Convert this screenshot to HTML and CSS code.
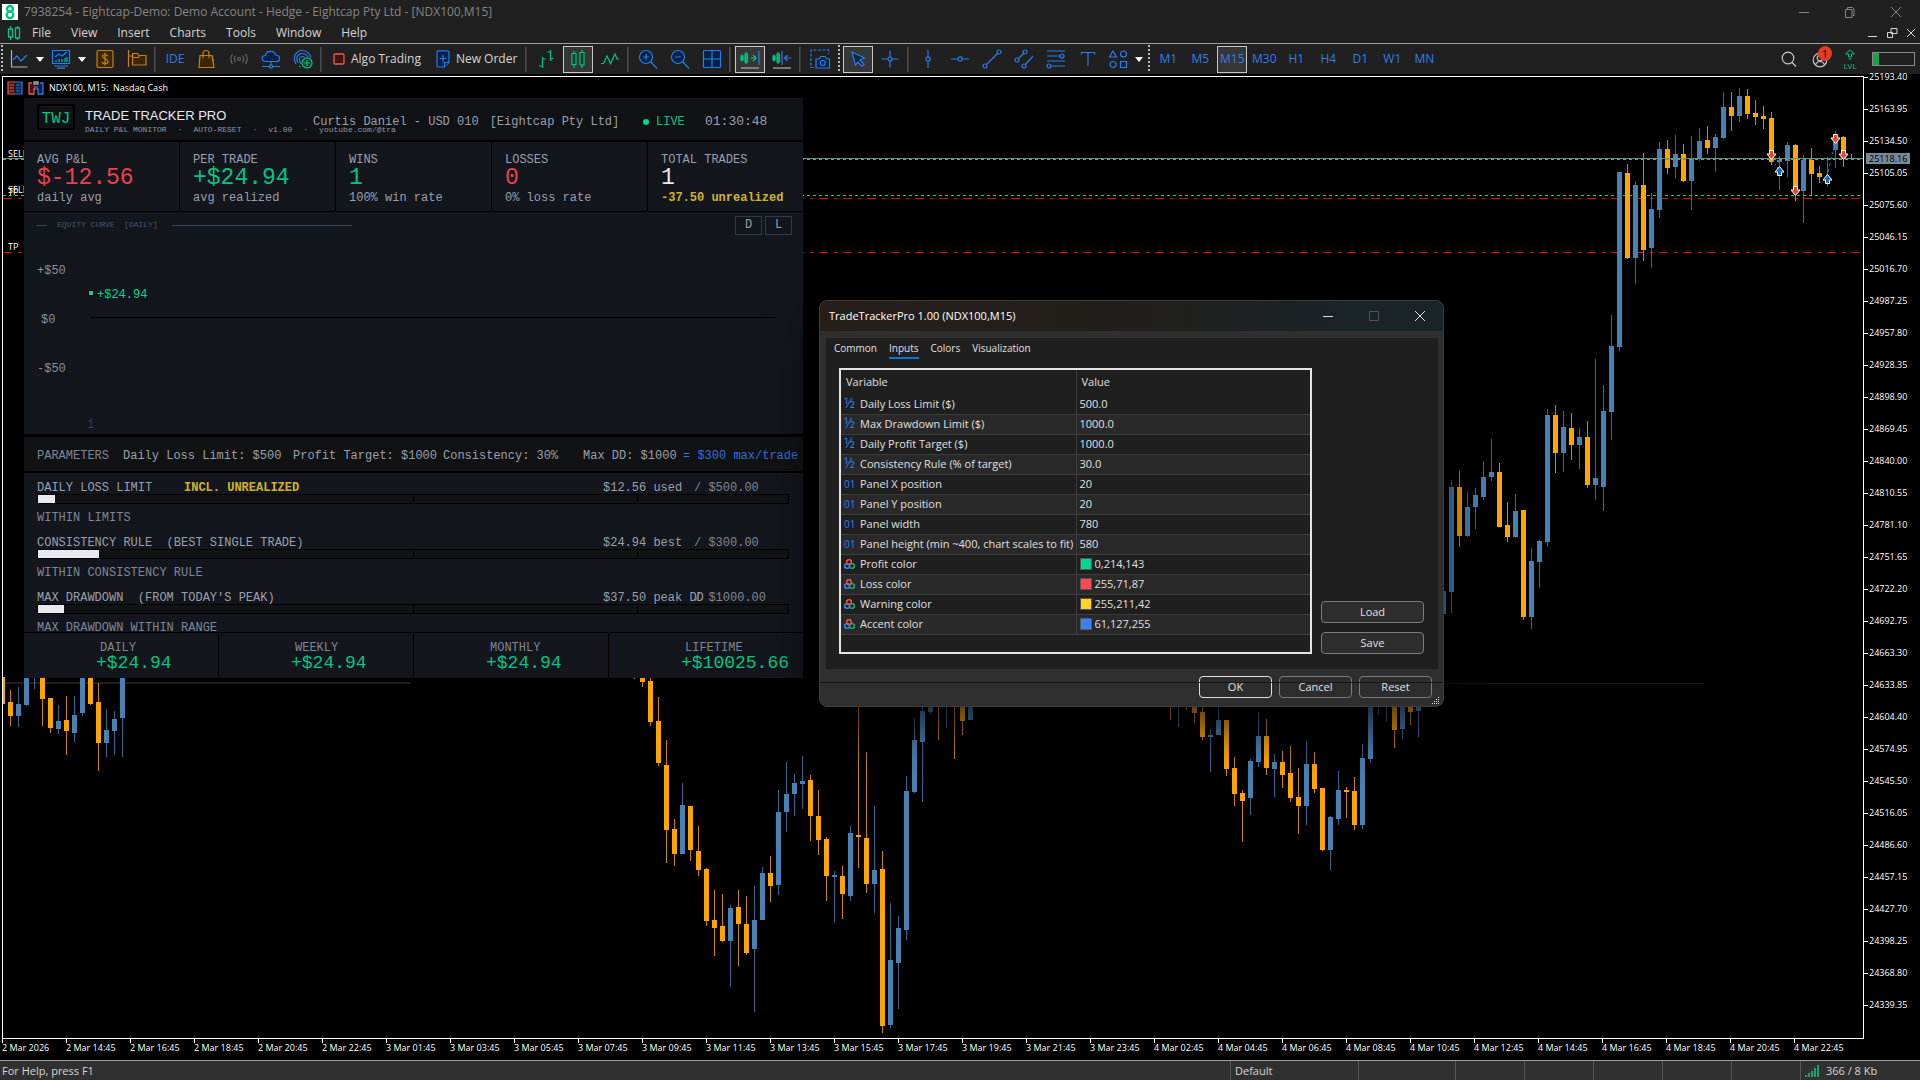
FILE: index.html
```html
<!DOCTYPE html>
<html lang="en">
<head>
<meta charset="utf-8">
<title>7938254 - Eightcap-Demo: Demo Account - Hedge - Eightcap Pty Ltd - [NDX100,M15]</title>
<link rel="stylesheet" href="styles.css">
</head>
<body>
<header class="titlebar">
  <svg class="logo" viewBox="0 0 16 16"><rect width="16" height="16" fill="#fff"/><g fill="none" stroke="#00c583" stroke-width="2.4"><circle cx="8" cy="4.9" r="2.9"/><circle cx="8" cy="10.9" r="3.3"/></g></svg>
  <span class="title-text">7938254 - Eightcap-Demo: Demo Account - Hedge - Eightcap Pty Ltd - [NDX100,M15]</span>
  <div class="win-controls">
    <button aria-label="Minimize"><svg viewBox="0 0 12 12"><path d="M1 6.5h10"/></svg></button>
    <button aria-label="Restore"><svg viewBox="0 0 12 12"><path d="M1.5 3.5h6.5v8h-6.5zM3.5 3V1.5h5l1.5 1.5v6.5h-1.5"/></svg></button>
    <button aria-label="Close"><svg viewBox="0 0 12 12"><path d="M1 1l10 10M11 1L1 11"/></svg></button>
  </div>
</header>
<nav class="menubar">
  <svg class="menu-logo" viewBox="0 0 14 16" fill="none" stroke="#00c583" stroke-width="1.3"><path d="M3.5 1v3M3.5 12v3M10.5 1v2M10.5 13v2M1.5 4h4v8h-4zM8.500 3h4v10h-4z"/></svg>
  <button>File</button><button>View</button><button>Insert</button><button>Charts</button><button>Tools</button><button>Window</button><button>Help</button>
  <div class="mdi-controls">
    <button aria-label="Minimize chart"><svg viewBox="0 0 12 12"><path d="M1 9.5h9"/></svg></button>
    <button aria-label="Restore chart"><svg viewBox="0 0 12 12"><path d="M5 1.5h6v5h-6zM1.5 5.5h5v5h-5z"/></svg></button>
    <button aria-label="Close chart"><svg viewBox="0 0 12 12"><path d="M2 2l8 8M10 2L2 10"/></svg></button>
  </div>
</nav>
<div class="toolbar">
  <i class="grip"></i>
  <button class="tool drop" aria-label="Line studies"><svg class="ic gray" viewBox="0 0 20 20"><path d="M2.5 1v17h16"/><path class="b" d="M4 11l4-4 4 5 6-6"/></svg><i class="caret"></i></button>
  <button class="tool drop" aria-label="Indicators"><svg class="ic blue" viewBox="0 0 20 20"><path class="fillb" d="M1.5 1.5h17v13h-17zM3 17h14M6 19.2h8"/><path d="M4 8l4-3 3 2 5-4"/><path class="g" d="M5 13v-2M8 13v-3M11 13v-3M14 13V9M16 13V8"/></svg><i class="caret"></i></button>
  <button class="tool" aria-label="Market"><svg class="ic amber" viewBox="0 0 20 20"><rect x="2" y="1.5" width="16" height="17" rx="1.5" fill="#3a2600"/><path d="M13 7c-.5-1.5-5.5-2-5.500.5S13 9.5 13 12.5s-5.5 2.5-6 .5M10 3.5v13"/></svg></button>
  <button class="tool" aria-label="Navigator"><svg class="ic amber" viewBox="0 0 20 20"><path d="M1.5 1v17M1.5 7h4"/><path fill="#3a2600" d="M5.5 4.5h5l1.5 2h7v9.5H5.500zM5.5 8.5h6l1-2"/></svg></button>
  <i class="sep"></i>
  <button class="tool ide">IDE</button>
  <button class="tool" aria-label="Shop"><svg class="ic amber" viewBox="0 0 20 20"><path fill="#3a2600" d="M3 6.5h12l2 12H2z"/><path d="M6 9V4.5c0-4 6-4 6 0V9M15 7l1.5 5"/></svg></button>
  <button class="tool" aria-label="Signals"><svg class="ic dim" viewBox="0 0 20 20"><circle cx="10" cy="10" r="1.5"/><path d="M6.5 6.5q-2.5 3.5 0 7M13.5 6.5q2.5 3.5 0 7M3.5 5q-3.5 5 0 10M16.5 5q3.5 5 0 10"/></svg></button>
  <button class="tool" aria-label="VPS"><svg class="ic blue" viewBox="0 0 20 20"><path class="fillb" d="M5 12.5c-5 0-5-6-.5-6C5 1 14 1 14.5 6c5.5 0 5 6.5 1 6.500z"/><path d="M10 13v3M1 17.5h7M12 17.5h7"/><circle cx="10" cy="17.5" r="1.6"/></svg></button>
  <button class="tool" aria-label="Community"><svg class="ic blue" viewBox="0 0 20 20"><path d="M3 15C-1 8 3 1.5 9 1.5s8.5 4 8.5 7.5M5 14C2 9 5 4.5 9 4.5s5.5 2 5.5 4.5M8 15c-3-5-1-7.5 1-7.5s2.500 1 2.5 2M6 17l1.500 1"/><circle class="g" cx="14" cy="14" r="5" fill="#073822"/><path class="g" d="M14 11v6M11 14h6"/></svg></button>
  <i class="sep"></i>
  <button class="tool wide"><svg class="ic12" viewBox="0 0 12 12"><rect x="1" y="1" width="10" height="10" rx="1" fill="#3d1514" stroke="#f0574f" stroke-width="1.3"/></svg>Algo Trading</button>
  <button class="tool wide"><svg class="ic14" viewBox="0 0 14 18" fill="#002244" stroke="#2b7de9" stroke-width="1.2"><path d="M1 2q0-1.2 1.2-1.2h9.6Q13 .8 13 2v10.5L8.5 17H2q-1 0-1-1.200z"/><path d="M8.5 17v-4.500H13M7 5v7M3.8 8.5h6.4"/></svg>New Order</button>
  <i class="sep"></i>
  <button class="tool" aria-label="Bar chart"><svg class="ic green" viewBox="0 0 20 20"><path d="M6.5 8v11M3 17h3.5M6.5 10h3M14.5 1v11M11.5 3h3M14.5 9.5h3"/></svg></button>
  <button class="tool on" aria-label="Candlesticks"><svg class="ic green" viewBox="0 0 20 20"><path fill="#073822" d="M4 4.5h4v11H4zM12 3.5h4v12.5h-4z"/><path d="M6 2v2.5M6 15.5V19M14 1v2.5M14 16v3"/></svg></button>
  <button class="tool" aria-label="Line chart"><svg class="ic green" viewBox="0 0 20 20"><path d="M1 14.5h2.5L7 7l3.5 7.500L15 5l2 5h2"/></svg></button>
  <i class="sep"></i>
  <button class="tool" aria-label="Zoom in"><svg class="ic blue" viewBox="0 0 20 20"><circle class="fillb" cx="8" cy="8" r="6.5"/><path d="M12.5 12.5l6.5 7M8 5v6M5 8h6"/></svg></button>
  <button class="tool" aria-label="Zoom out"><svg class="ic blue" viewBox="0 0 20 20"><circle class="fillb" cx="8" cy="8" r="6.5"/><path d="M12.5 12.5l6.5 7M5 8h6"/></svg></button>
  <button class="tool" aria-label="Tile windows"><svg class="ic blue" viewBox="0 0 20 20"><rect class="fillb" x="1.5" y="1.5" width="17" height="17" rx="1"/><path d="M10 1.5v17M1.5 10h17"/></svg></button>
  <i class="sep"></i>
  <button class="tool on" aria-label="Auto scroll"><svg class="ic green" viewBox="0 0 20 20"><path d="M2 5.5v7M1 7h2v4H1zM6 3v12M5 5h2.5v8H5zM10.5 9h5M13 6l3 3-3 3"/><path class="b" d="M19 2v14"/><path class="w" d="M1 19h18"/></svg></button>
  <button class="tool" aria-label="Chart shift"><svg class="ic green" viewBox="0 0 20 20"><path d="M2 5.5v7M1 7h2v4H1zM6 3v12M5 5h2.5v8H5z"/><path class="b" d="M10 2v14M13 9h6M15.5 6l-3 3 3 3"/><path class="w" d="M1 19h18"/></svg></button>
  <i class="sep"></i>
  <button class="tool" aria-label="Screenshot"><svg class="ic blue" viewBox="0 0 20 20"><path stroke-dasharray="3 1.5" d="M3.5 18.5h-2.5v-17.500h17.5v4"/><path class="fillb" d="M6 10h3l2-2.5h4l2 2.5h2.5v9H6z"/><circle cx="12.8" cy="14" r="2.5"/><path d="M12.5 14h.7"/></svg></button>
  <i class="grip"></i>
  <button class="tool on" aria-label="Cursor"><svg class="ic blue" viewBox="0 0 20 20"><path class="fillb" d="M4 3l12.5 6-4.5 2 4 4.5-2 1.8-4-4.300L7.500 16z"/></svg></button>
  <button class="tool" aria-label="Crosshair"><svg class="ic blue" viewBox="0 0 20 20"><circle cx="10" cy="10" r="2"/><path d="M10 1.5V8M10 12v6.5M1.5 10H8M12 10h6.5"/></svg></button>
  <i class="sep"></i>
  <button class="tool" aria-label="Vertical line"><svg class="ic blue" viewBox="0 0 20 20"><circle cx="10" cy="10" r="2.2"/><path d="M10 1v6.5M10 12.5V19"/></svg></button>
  <button class="tool" aria-label="Horizontal line"><svg class="ic blue" viewBox="0 0 20 20"><circle cx="10" cy="10" r="2.2"/><path d="M1 10h6.5M12.5 10H19"/></svg></button>
  <button class="tool" aria-label="Trendline"><svg class="ic blue" viewBox="0 0 20 20"><circle cx="3" cy="17" r="2"/><circle cx="17" cy="3" r="2"/><path d="M4.5 15.5l11-11"/></svg></button>
  <button class="tool" aria-label="Channel"><svg class="ic blue" viewBox="0 0 20 20"><circle cx="3" cy="11" r="2"/><circle cx="11" cy="3" r="2"/><circle cx="10" cy="17" r="2"/><path d="M4.5 9.5l5-5M11.5 15.5L19 7"/></svg></button>
  <button class="tool" aria-label="Fibonacci"><svg class="ic blue" viewBox="0 0 20 20"><path d="M1 2h18M1 7h13M1 12h18M5 17h14"/><circle cx="16" cy="7" r="2"/><circle cx="3" cy="17" r="2"/></svg></button>
  <button class="tool" aria-label="Text"><svg class="ic blue" viewBox="0 0 20 20"><path d="M3.5 5.5V3.5h13v2M10 3.5V17"/></svg></button>
  <button class="tool drop" aria-label="Shapes"><svg class="ic blue" viewBox="0 0 20 20"><path d="M5 2l3.5 6h-7zM12.5 12.5h6v6h-6z"/><circle cx="15.5" cy="5" r="3"/><circle cx="5" cy="15.5" r="3"/></svg><i class="caret"></i></button>
  <i class="grip"></i>
  <button class="tool tf">M1</button><button class="tool tf">M5</button><button class="tool tf on">M15</button><button class="tool tf">M30</button><button class="tool tf">H1</button><button class="tool tf">H4</button><button class="tool tf">D1</button><button class="tool tf">W1</button><button class="tool tf">MN</button>
  <div class="tool-end">
    <button class="tool" aria-label="Search"><svg class="ic light" viewBox="0 0 20 20"><circle cx="9" cy="9" r="5.8"/><path d="M13 13.5l4 4"/></svg></button>
    <button class="tool account" aria-label="Account"><svg class="ic light" viewBox="0 0 20 20"><circle cx="9" cy="11" r="6.8"/><circle cx="9" cy="9" r="2.8"/><path d="M4.5 16q1-3.5 4.5-3.5t4.5 3.5"/></svg><span class="badge">1</span></button>
    <span class="lvl"><svg viewBox="0 0 12 12" fill="none" stroke="#00c583"><path d="M6 .8L10.500 5H7.500v3h-3V5h-3z"/><path d="M4.5 10h3"/></svg>LVL</span>
    <span class="battery"><i></i></span>
  </div>
</div>
<main class="workspace">
  <section class="plot">
    <svg id="chart" class="chart" width="1860" height="961" viewBox="3 77 1860 961" shape-rendering="crispEdges"></svg>
    <div class="chart-head">
      <svg width="16" height="14" viewBox="0 0 16 14" fill="none" stroke-width="1.2"><path stroke="#f0574f" fill="#3d1514" d="M8 1H1v12h7"/><path stroke="#2b7de9" fill="#002244" d="M8 1h7v12H8"/><path stroke="#f0574f" d="M2.5 4H7M2.5 7H7M2.5 10H7"/><path stroke="#2b7de9" d="M9 4h4.5M9 7h4.5M9 10h4.5"/></svg>
      <svg width="16" height="14" viewBox="0 0 16 14" fill="none" stroke-width="1.3"><path stroke="#f0574f" fill="#3d1514" d="M4 2H1v11h5V8h1V5"/><path stroke="#2b7de9" fill="#002244" d="M12 2h3v11h-5V8H9V5"/><path stroke="#aaa" d="M6 1h4v2H6z"/></svg>
      <span>NDX100, M15:&nbsp; Nasdaq Cash</span>
    </div>

    <article class="panel">
      <header class="p-head">
        <div class="twj">TWJ</div>
        <div class="p-title">
          <h1>TRADE TRACKER PRO</h1>
          <p><span>DAILY P&amp;L MONITOR</span><span>·</span><span>AUTO-RESET</span><span>·</span><span>v1.00</span><span>·</span><span>youtube.com/@tra</span></p>
        </div>
        <div class="p-acct"><span>Curtis Daniel - USD 010</span><span>[Eightcap Pty Ltd]</span></div>
        <div class="p-live"><i></i>LIVE</div>
        <time>01:30:48</time>
      </header>
      <div class="stats">
        <div><h2>AVG P&amp;L</h2><b class="red">$-12.56</b><p>daily avg</p></div>
        <div><h2>PER TRADE</h2><b>+$24.94</b><p>avg realized</p></div>
        <div><h2>WINS</h2><b>1</b><p>100% win rate</p></div>
        <div><h2>LOSSES</h2><b class="red">0</b><p>0% loss rate</p></div>
        <div><h2>TOTAL TRADES</h2><b class="white">1</b><p class="warn">-37.50 unrealized</p></div>
      </div>
      <div class="equity">
        <div class="eq-head"><i class="dash"></i><span>EQUITY CURVE&nbsp; [DAILY]</span><i class="rule"></i><div class="eq-btns"><button>D</button><button>L</button></div></div>
        <svg class="eq-plot" width="779" height="196" viewBox="24 238 779 196">
          <rect x="91" y="317" width="685" height="1" fill="#000"/>
          <rect x="88" y="290" width="6" height="6" fill="#000"/><rect x="89" y="291" width="4" height="4" fill="#00d68f"/>
          <text x="37" y="274">+$50</text><text x="41" y="323">$0</text><text x="37" y="372">-$50</text>
          <text x="97" y="298" class="gain">+$24.94</text><text x="87" y="428" class="faint">1</text>
        </svg>
      </div>
      <div class="params"><span class="muted">PARAMETERS</span><span>Daily Loss Limit: $500</span><span>Profit Target: $1000</span><span>Consistency: 30%</span><span>Max DD: $1000</span><span class="accent">= $300 max/trade</span></div>
      <div class="limits">
        <div class="limit"><div class="l-row"><span>DAILY LOSS LIMIT</span><span class="warn">INCL. UNREALIZED</span><span>$12.56 used</span><span class="muted">/ $500.00</span></div><div class="meter"><i style="width:2.3%"></i></div><p>WITHIN LIMITS</p></div>
        <div class="limit"><div class="l-row"><span>CONSISTENCY RULE&nbsp; (BEST SINGLE TRADE)</span><span></span><span>$24.94 best</span><span class="muted">/ $300.00</span></div><div class="meter"><i style="width:8.1%"></i></div><p>WITHIN CONSISTENCY RULE</p></div>
        <div class="limit"><div class="l-row"><span>MAX DRAWDOWN&nbsp; (FROM TODAY'S PEAK)</span><span></span><span>$37.50 peak DD</span><span class="muted">/ $1000.00</span></div><div class="meter"><i style="width:3.5%"></i></div><p>MAX DRAWDOWN WITHIN RANGE</p></div>
      </div>
      <footer class="totals">
        <div><h2>DAILY</h2><b>+$24.94</b></div><div><h2>WEEKLY</h2><b>+$24.94</b></div><div><h2>MONTHLY</h2><b>+$24.94</b></div><div><h2>LIFETIME</h2><b>+$10025.66</b></div>
      </footer>
    </article>

    <section class="dialog" role="dialog" aria-label="TradeTrackerPro">
      <header class="d-title"><span>TradeTrackerPro 1.00 (NDX100,M15)</span>
        <div class="d-controls">
          <button aria-label="Minimize"><svg viewBox="0 0 12 12"><path d="M1 6.5h10"/></svg></button>
          <button aria-label="Maximize" disabled><svg viewBox="0 0 12 12"><path d="M1.5 1.5h9v9h-9z"/></svg></button>
          <button aria-label="Close"><svg viewBox="0 0 12 12"><path d="M1 1l10 10M11 1L1 11"/></svg></button>
        </div>
      </header>
      <div class="d-body">
        <div class="tabs" role="tablist"><button role="tab">Common</button><button role="tab" class="sel" aria-selected="true">Inputs</button><button role="tab">Colors</button><button role="tab">Visualization</button></div>
        <div class="d-main">
          <div class="grid-box">
            <table class="inputs">
              <thead><tr><th>Variable</th><th>Value</th></tr></thead>
              <tbody>
                <tr><td class="t-half">Daily Loss Limit ($)</td><td>500.0</td></tr>
                <tr><td class="t-half">Max Drawdown Limit ($)</td><td>1000.0</td></tr>
                <tr><td class="t-half">Daily Profit Target ($)</td><td>1000.0</td></tr>
                <tr><td class="t-half">Consistency Rule (% of target)</td><td>30.0</td></tr>
                <tr><td class="t-int">Panel X position</td><td>20</td></tr>
                <tr><td class="t-int">Panel Y position</td><td>20</td></tr>
                <tr><td class="t-int">Panel width</td><td>780</td></tr>
                <tr><td class="t-int">Panel height (min ~400, chart scales to fit)</td><td>580</td></tr>
                <tr><td class="t-color">Profit color</td><td><i class="sw profit"></i>0,214,143</td></tr>
                <tr><td class="t-color">Loss color</td><td><i class="sw loss"></i>255,71,87</td></tr>
                <tr><td class="t-color">Warning color</td><td><i class="sw warning"></i>255,211,42</td></tr>
                <tr><td class="t-color">Accent color</td><td><i class="sw accentc"></i>61,127,255</td></tr>
              </tbody>
            </table>
          </div>
          <div class="d-side"><button class="btn">Load</button><button class="btn">Save</button></div>
        </div>
      </div>
      <footer class="d-foot"><button class="btn primary">OK</button><button class="btn">Cancel</button><button class="btn">Reset</button>
        <svg class="resize" viewBox="0 0 9 9" fill="#ddd"><path d="M7 0h1v1H7zM5 2h1v1H5zM7 2h1v1H7zM3 4h1v1H3zM5 4h1v1H5zM7 4h1v1H7zM1 6h1v1H1zM3 6h1v1H3zM5 6h1v1H5zM7 6h1v1H7z"/></svg>
      </footer>
    </section>
  </section>
  <aside class="price-axis"><ol id="prices"></ol><span class="last-price">25118.16</span></aside>
  <ol class="time-axis" id="times"></ol>
</main>
<footer class="statusbar">
  <span class="s-help">For Help, press F1</span><span class="s-prof">Default</span><span class="s-a"></span><span class="s-b"></span><span class="s-b"></span><span class="s-b"></span><span class="s-b"></span><span class="s-b"></span>
  <span class="s-net"><svg width="14" height="12" viewBox="0 0 14 12" fill="#14a56c"><path d="M0 10h2v2H0zM3 8h2v4H3zM6 6h2v6H6zM9 3h2v9H9zM12 0h2v12h-2z"/></svg>366 / 8 Kb</span>
</footer>
<script src="chart.js"></script>
</body>
</html>
```
FILE: styles.css
```css
* { box-sizing: border-box; }
body {
  margin: 0; height: 100vh; display: flex; flex-direction: column; overflow: hidden;
  background: #202020; color: #d6d6d6;
  font: 12px/16px "Open Sans", "Noto Sans", sans-serif;
}
button { font: inherit; color: inherit; background: none; border: 0; padding: 0; }
h1, h2, p, ol { margin: 0; padding: 0; font-weight: 400; list-style: none; }
i { font-style: normal; }

.titlebar { display: flex; align-items: center; height: 23px; padding-left: 2px; gap: 6px; color: #858585; }
.logo { width: 16px; height: 16px; }
.win-controls { margin-left: auto; display: flex; align-items: center; padding-right: 18px; gap: 34px; }
.win-controls svg, .mdi-controls svg, .d-controls svg { width: 12px; height: 12px; display: block; fill: none; stroke: currentColor; }
.menubar { display: flex; align-items: center; height: 20px; padding-left: 7px; }
.menu-logo { width: 14px; height: 16px; margin-right: 1px; }
.menubar > button { padding: 0 10px; }
.mdi-controls { margin-left: auto; display: flex; gap: 7px; padding-right: 3px; }

.toolbar { display: flex; align-items: center; gap: 2px; height: 31px; border-top: 1px solid #a0a0a0; }
.grip { width: 4px; height: 28px; background: repeating-linear-gradient(#bbb 0 2px, transparent 2px 4px) 1px 0 / 2px 100% no-repeat; }
.sep { width: 4px; height: 25px; border-left: 1px solid #4a4a4a; border-right: 1px solid #202020; background: #3a3a3a; background-clip: content-box; padding-right: 1px; }
.tool { width: 30px; height: 27px; display: flex; align-items: center; justify-content: center; flex: none; }
.tool.on { background: #363636; border: 1px solid #c8c8c8; }
.tool.drop { width: 40px; gap: 7px; }
.tool.wide { width: auto; padding: 0 6px 0 7px; gap: 6px; }
.tool.tf, .ide { color: #2f7fe8; }
.ic { width: 20px; height: 20px; fill: none; stroke-width: 1.2; flex: none; }
.ic12 { width: 12px; height: 12px; }
.ic14 { width: 14px; height: 18px; }
.blue, .b { stroke: #2b7de9; }
.fillb { fill: #002244; }
.green, .g { stroke: #00c583; }
.amber { stroke: #c88214; }
.gray { stroke: #b0b0b0; }
.dim { stroke: #666; }
.light { stroke: #c8c8c8; }
.w { stroke: #b0b0b0; }
.caret { border: 4px solid transparent; border-top: 5px solid #fff; border-bottom: 0; }
.tool-end { margin-left: auto; display: flex; align-items: center; gap: 2px; padding-right: 5px; }
.account { position: relative; }
.badge { position: absolute; left: 12px; top: 0; width: 14px; height: 15px; border-radius: 50%; background: #e23c22; color: #111; font-size: 11px; line-height: 15px; text-align: center; }
.lvl { display: flex; flex-direction: column; align-items: center; width: 24px; color: #00c583; font-size: 8px; line-height: 9px; }
.lvl svg { width: 12px; height: 12px; }
.battery { width: 43px; height: 14px; margin-left: 8px; border: 1px solid #888; display: flex; }
.battery i { width: 6px; background: #1fa045; }

.workspace { flex: 1; display: grid; grid-template: minmax(0, 1fr) 21px / minmax(0, 1fr) 56px; background: #000; }
.plot { position: relative; margin: 2px 0 0 2px; border: 1px solid #fff; overflow: hidden; }
.chart { position: absolute; right: 0; top: 0; font: 9px "Open Sans", sans-serif; fill: #fff; }
.chart-head { position: relative; display: flex; align-items: center; gap: 5px; height: 21px; padding-left: 4px; color: #fff; font-size: 9px; }

.price-axis { position: relative; color: #fff; font-size: 9px; height: 0; }
.price-axis ol { margin-top: -13px; }
.price-axis li { display: flex; align-items: center; gap: 1px; height: 32px; }
.price-axis li::before { content: ""; width: 4px; height: 1px; background: #fff; }
.last-price { position: absolute; left: 2px; top: 79px; width: 44px; height: 11px; padding-left: 3px; background: #778899; color: #000; line-height: 11px; }
.time-axis { grid-column: 1 / 3; display: flex; padding-left: 2px; overflow: hidden; color: #fff; font-size: 9px; line-height: 10px; }
.time-axis li { flex: none; width: 64px; white-space: nowrap; }
.time-axis li::before { content: ""; display: block; width: 1px; height: 4px; background: #fff; }

.statusbar { display: flex; height: 20px; border-top: 1px solid #a0a0a0; background: #303030; font-size: 11px; line-height: 19px; }
.statusbar span { border-left: 1px solid #565656; padding-left: 4px; }
.statusbar .s-help { flex: 1; border: 0; padding-left: 2px; }
.s-prof { width: 128px; }
.s-a { width: 97px; }
.s-b { width: 69px; }
.statusbar .s-net { width: 120px; display: flex; align-items: center; gap: 7px; }

.panel { position: absolute; left: 21px; top: 21px; width: 779px; background: #000; color: #9aa0ab; font: 12px/14px "Liberation Mono", "Courier New", monospace; white-space: nowrap; }
.p-head { display: flex; height: 42px; margin-bottom: 2px; padding-left: 13px; background: #111216; }
.twj { width: 38px; height: 26px; margin-top: 6px; border: 2px solid #000; color: #00c583; font-size: 16px; line-height: 26px; text-align: center; }
.p-title { width: 238px; padding: 8px 0 0 10px; }
.p-title h1 { color: #e8eaf0; font: 13px/20px "Liberation Sans", Arial, sans-serif; }
.p-title p { display: flex; gap: 11px; color: #8f97a8; font-size: 8px; line-height: 8px; }
.p-acct { display: flex; gap: 11px; width: 330px; padding-top: 17px; }
.p-live { display: flex; align-items: center; gap: 7px; width: 62px; height: 14px; margin-top: 17px; color: #00c583; }
.p-live i { width: 6px; height: 6px; border-radius: 50%; background: #00d68f; }
.p-head time { padding-top: 17px; font-size: 13px; }
.stats { display: grid; grid-template-columns: 155px 155px 155px 155px 1fr; gap: 1px; height: 69px; margin-bottom: 1px; }
.stats > div { padding: 11px 0 0 13px; background: #13161d; }
.stats h2 { font-size: 12px; line-height: 14px; }
.stats b { display: block; color: #00c583; font-size: 23px; font-weight: 400; line-height: 23px; }
.stats p { line-height: 16px; }
.stats b.red { color: #e8414f; }
.stats b.white { color: #e8eaf0; }
.panel .warn { color: #d0b428; font-weight: 700; }
.equity { height: 222px; margin-bottom: 3px; background: #13161d; }
.eq-head { display: flex; align-items: center; height: 26px; padding: 0 11px 0 13px; color: #4a5672; font-size: 8px; }
.dash { width: 10px; height: 1px; margin-right: 10px; background: #3a465e; }
.rule { width: 180px; height: 1px; margin-left: 14px; background: #3a465e; }
.eq-btns { margin-left: auto; display: flex; gap: 3px; }
.eq-btns button { width: 27px; height: 19px; border: 1px solid #2f3a50; color: #9aa0ab; font-size: 12px; line-height: 17px; }
.eq-plot { display: block; fill: #8a909c; }
.eq-plot .gain { fill: #00d68f; }
.eq-plot .faint { fill: #34405a; }
.params { display: grid; grid-template-columns: 86px 170px 150px 140px 100px 1fr; align-items: center; height: 34px; margin-bottom: 2px; padding: 4px 0 0 13px; background: #111214; }
.muted { color: #7f8694; }
.accent { color: #3470dc; }
.limits { height: 159px; padding: 7px 14px 0 13px; background: #13161d; overflow: hidden; }
.limit { height: 55px; }
.l-row { display: grid; grid-template-columns: 147px 419px 91px 1fr; height: 14px; line-height: 17px; }
.meter { height: 10px; border: 1px solid #000; background: linear-gradient(#000, #000) 50% 0 / 1px 100% no-repeat, linear-gradient(#000, #000) 80% 0 / 1px 100% no-repeat, #111214; }
.meter i { display: block; height: 100%; background: #e8eaf0; }
.limit p { padding-top: 7px; color: #7f8694; }
.totals { display: grid; grid-template-columns: 195px 195px 195px 1fr; gap: 0; height: 45px; margin-top: 1px; }
.totals > div { padding: 8px 0 0 72px; border-right: 1px solid #000; background: #13161d; }
.totals > div:last-child { border: 0; }
.totals h2 { padding-left: 4px; font-size: 12px; line-height: 14px; color: #7f8694; }
.totals b { display: block; color: #00c583; font-size: 18px; font-weight: 400; line-height: 16px; }

.dialog { position: absolute; left: 816px; top: 223px; width: 625px; border: 1px solid #3c3c3c; border-radius: 8px; background: #2f2f2f; color: #e0e0e0; font-size: 11px; overflow: hidden; box-shadow: 0 20px 50px rgba(0, 0, 0, .75); }
.d-title { display: flex; align-items: center; height: 30px; padding: 0 17px 0 9px; background: linear-gradient(90deg, #271e1a, #211f1b 50%, #1a2327 85%); color: #fff; }
.d-controls { margin-left: auto; display: flex; gap: 34px; color: #ddd; }
.d-controls button:disabled { color: #555; }
.d-body { margin: 7px 5px 7px 6px; padding: 1px 14px 15px 13px; background: #1f1f1f; }
.tabs { display: flex; gap: 12px; margin-left: -5px; font-size: 10px; }
.tabs button { height: 20px; line-height: 16px; border-bottom: 2px solid transparent; }
.tabs .sel { border-color: #0078d7; }
.d-main { display: flex; gap: 9px; margin-top: 9px; }
.grid-box { flex: 1; height: 286px; border: 2px solid #e4e4e4; }
.inputs { width: 100%; border-collapse: collapse; table-layout: fixed; }
.inputs th, .inputs td { height: 20px; padding: 0 0 0 3px; border-bottom: 1px solid #3d3d3d; font-weight: 400; text-align: left; line-height: 16px; white-space: nowrap; }
.inputs th { height: 24px; padding-left: 5px; border-bottom: 0; }
.inputs th:first-child { width: 235px; }
.inputs tr > :first-child { border-right: 1px solid #3d3d3d; }
.inputs tbody tr:nth-child(even) { background: #292929; }
.inputs td::before { display: inline-block; width: 16px; color: #2f7fe8; font-size: 10px; }
.inputs .t-half::before { content: "½"; font-size: 14px; line-height: 14px; }
.t-int::before { content: "01"; }
.t-color::before { content: ""; height: 10px; vertical-align: -1px; background:
  radial-gradient(circle at 5px 3px, transparent 1px, #e0524a 2px 3px, transparent 3px),
  radial-gradient(circle at 3px 7px, transparent 1px, #2b7de9 2px 3px, transparent 3px),
  radial-gradient(circle at 8px 7px, transparent 1px, #14a56c 2px 3px, transparent 3px); }
.sw { display: inline-block; width: 12px; height: 12px; margin-right: 3px; vertical-align: -2px; border: 1px solid #555; }
.profit { background: #00d68f; }
.loss { background: #ff4757; }
.warning { background: #ffd32a; }
.accentc { background: #3d7fff; }
.d-side { width: 103px; display: flex; flex-direction: column; justify-content: flex-end; gap: 9px; }
.btn { height: 22px; border: 1px solid #7c7c7c; border-radius: 4px; background: #2d2d2d; }
.btn.primary { border-color: #e0e0e0; }
.d-foot { position: relative; display: flex; justify-content: flex-end; gap: 7px; height: 30px; padding-right: 11px; }
.d-foot .btn { width: 73px; }
.d-foot::after { content: ""; position: absolute; left: 0; right: 0; top: 6px; height: 1px; background: #161616; }
.resize { position: absolute; right: 3px; bottom: 0; width: 9px; height: 9px; }
```
FILE: chart.js
```js
const NS = 'http://www.w3.org/2000/svg';
const svg = document.getElementById('chart');
const UP = '#4682b4', DOWN = '#ffa500';

function add(tag, attrs, text) {
  const el = document.createElementNS(NS, tag);
  for (const k in attrs) el.setAttribute(k, attrs[k]);
  if (text) el.textContent = text;
  svg.appendChild(el);
  return el;
}

// Each run: x of the first candle, then [direction, high, body top, body bottom, low], one every 8px.
const runs = [
  [2, ['d',677,677,704,704],['d',690,702,716,726],['u',687,704,716,727],['u',660,660,705,706],['u',660,660,661,689],['d',660,660,699,726],['d',698,698,728,733],['u',705,721,729,734],['d',696,720,731,755],['u',696,715,733,742],['u',660,660,713,716],['d',660,660,704,705],['d',683,702,743,771],['u',709,730,743,757],['u',711,719,731,755],['u',660,660,718,757]],
  [634, ['d',660,660,661,679],['d',660,660,682,687],['d',678,681,722,726],['d',697,721,763,766],['d',740,765,830,863],['d',819,829,854,866],['u',783,805,854,854],['d',806,806,850,861],['d',826,851,870,876],['d',868,869,921,926],['d',890,920,928,956],['d',894,926,941,942],['u',905,908,941,987],['d',890,907,924,966],['d',896,924,953,955],['u',886,920,949,1012],['u',867,873,920,920],['d',856,873,886,902],['u',790,812,885,895],['u',762,794,812,832],['u',774,783,794,816],['u',756,781,784,809],['d',775,780,816,841],['d',790,816,840,855],['d',837,839,876,901],['u',871,875,877,923],['d',866,876,894,919],['u',826,833,896,901],['d',690,835,837,868],['d',752,838,884,893],['u',806,870,884,913],['d',851,869,1026,1033],['u',903,960,1025,1028],['u',916,928,963,1009],['u',776,791,930,940],['u',718,740,792,793],['u',700,711,742,802],['u',690,690,712,714],['d',690,690,691,740],['u',690,690,691,728],['d',690,690,691,759],['d',690,690,721,735],['u',690,690,720,720]],
  [1170, ['d',690,690,691,720],['u',690,690,691,727],['d',690,690,691,710],['d',690,690,713,723],['d',700,712,737,740],['u',729,735,737,772],['u',700,720,735,735],['d',720,720,769,776],['d',757,768,794,806],['d',790,793,801,842],['u',759,761,798,815],['u',712,736,762,767],['d',719,736,768,775],['u',754,762,769,797],['d',751,762,775,788],['d',746,773,798,802],['d',768,797,806,834],['u',741,764,806,825],['d',752,764,789,793],['d',788,788,850,851],['u',816,817,850,870],['u',771,790,819,825],['d',787,790,792,818],['d',777,791,825,830],['u',744,758,825,829],['u',690,690,759,763],['u',690,690,691,715],['u',690,690,691,721],['d',690,690,730,748],['u',690,690,729,739],['d',690,690,712,725],['u',690,690,711,737]],
  [1443, ['u',574,591,614,623],['u',480,487,592,613],['d',471,487,536,547],['u',492,507,536,537],['u',488,495,507,529],['u',461,477,497,500],['u',439,472,477,481],['d',463,472,527,527],['d',502,525,537,542],['u',494,511,537,538],['d',510,510,617,620],['u',548,561,617,629],['u',540,541,562,588],['u',409,415,542,547],['d',405,415,453,473],['u',411,427,453,472],['d',413,428,445,460],['u',428,437,445,469],['d',421,437,485,488],['u',359,478,485,500],['u',385,411,487,511],['u',315,346,412,440],['u',172,172,347,351],['d',164,173,258,259],['u',181,185,258,284],['d',153,185,250,261],['u',193,209,248,268],['u',142,149,210,218],['d',140,149,168,174],['u',135,154,167,179],['d',144,154,181,182],['u',136,158,181,210],['u',128,141,159,161],['d',126,140,148,154],['u',134,137,148,172],['u',92,107,138,139],['d',92,107,116,131],['u',88,96,116,122],['d',89,96,114,119],['d',100,113,117,125],['d',106,116,119,129],['d',112,118,162,165],['u',156,160,162,190],['u',142,145,161,177],['d',144,145,191,201],['u',155,160,191,223],['d',148,160,174,196],['d',166,173,177,183],['u',157,177,180,187],['u',131,140,150,168],['d',136,137,158,167],['d',154,158,159,160]]
];

// Stop, take-profit and position levels.
add('path', { d: 'M3 198.5H1860M3 252.5H1860', stroke: '#f00000', 'stroke-dasharray': '9 6 3 6', fill: 'none' });
add('path', { d: 'M3 195.5H1860', stroke: '#32cd32', 'stroke-dasharray': '3 3', fill: 'none' });
add('rect', { x: 3, y: 682, width: 408, height: 2, fill: '#1e1e1e' });
add('rect', { x: 1444, y: 683, width: 260, height: 1, fill: '#15151a' });

for (const [start, ...candles] of runs) {
  candles.forEach(([dir, high, top, bottom, low], i) => {
    const x = start + i * 8, fill = dir === 'u' ? UP : DOWN;
    add('rect', { x, y: high, width: 1, height: low - high, fill, opacity: 0.8 });
    add('rect', { x: x - 2, y: top, width: 5, height: bottom - top, fill });
  });
}
add('rect', { x: 3, y: 158, width: 1860, height: 1, fill: '#778899' });
add('path', { d: 'M3 159.5H1860', stroke: '#32cd32', 'stroke-dasharray': '3 3', fill: 'none' });

// Deals: entries and exits joined by dotted lines.
add('path', { d: 'M1771 157L1779 170', stroke: '#e8462a', 'stroke-dasharray': '2 2' });
add('path', { d: 'M1827 178L1835 140', stroke: '#1668b8', 'stroke-dasharray': '3 3' });
const arrow = (x, y, s, fill) => add('path', {
  transform: `translate(${x} ${y}) scale(1 ${s})`, fill, stroke: '#fff', 'shape-rendering': 'auto',
  d: 'M-2 -4.5H2V-1H4.5L0 4.5L-4.5 -1H-2Z'
});
[[1771,155],[1795,191],[1835,139],[1843,155]].forEach(([x, y]) => arrow(x + 0.5, y, 1, '#e8462a'));
[[1779,171],[1827,179]].forEach(([x, y]) => arrow(x + 0.5, y, -1, '#1668b8'));

[['SELL', 157], ['SELL', 193], ['TP', 195], ['TP', 250]].forEach(([t, y]) => add('text', { x: 8, y }, t));

const prices = document.getElementById('prices');
for (let i = 0; i < 30; i++) {
  const li = document.createElement('li');
  li.textContent = (25193.4 - i * 29.45).toFixed(2);
  prices.appendChild(li);
}

const times = ['2 Mar 2026'];
for (const h of [14, 16, 18, 20, 22]) times.push(`2 Mar ${h}:45`);
for (let h = 1; h < 24; h += 2) times.push(`3 Mar ${String(h).padStart(2, '0')}:45`);
for (let h = 2; h < 24; h += 2) times.push(`4 Mar ${String(h).padStart(2, '0')}:45`);
for (const t of times) {
  const li = document.createElement('li');
  li.textContent = t;
  document.getElementById('times').appendChild(li);
}
```
